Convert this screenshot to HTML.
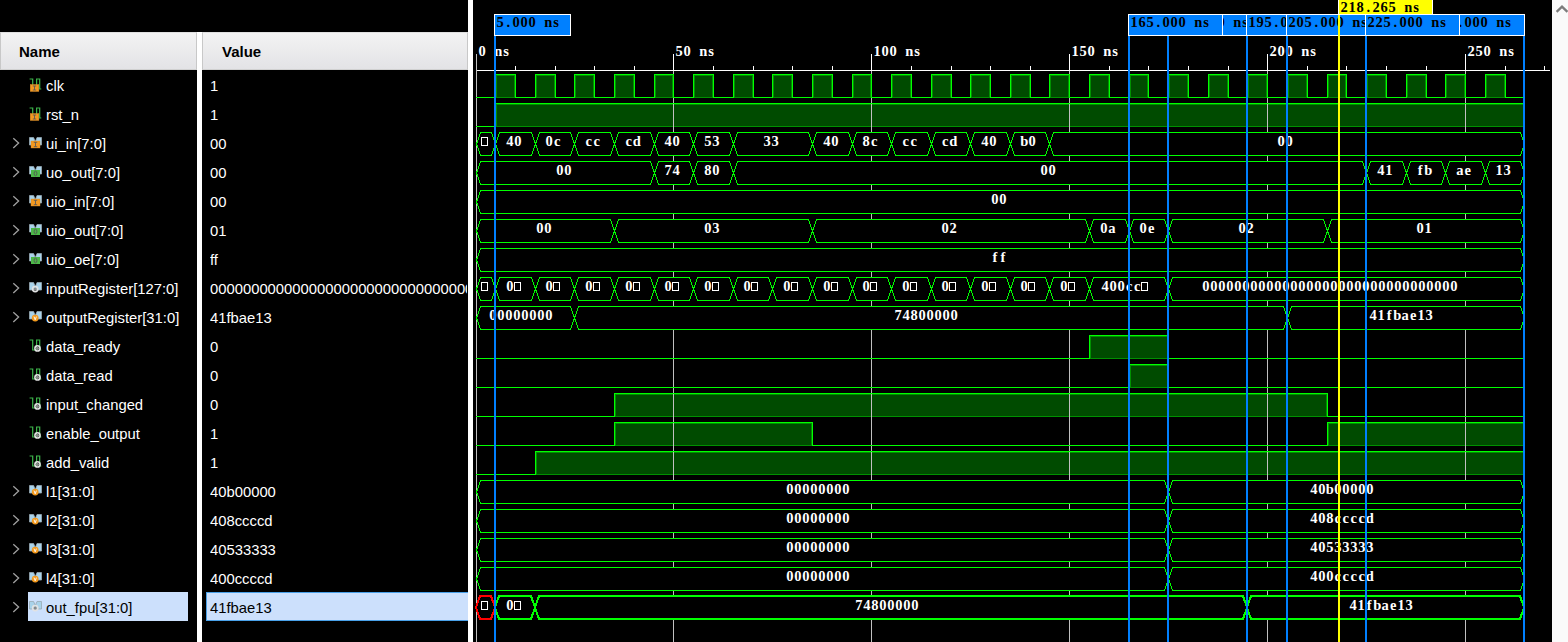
<!DOCTYPE html>
<html><head><meta charset="utf-8"><style>
html,body{margin:0;padding:0;width:1568px;height:642px;overflow:hidden;background:#000}
.p{position:absolute}
.hdr{position:absolute;top:32px;height:38px;box-sizing:border-box;background:linear-gradient(#f3f3f3,#e3e3e6);border-left:1px solid #c8c8c8;border-right:1px solid #c8c8c8;border-top:1px solid #e0e0e0;border-bottom:1px solid #d0d0d0;font:bold 15px "Liberation Sans",sans-serif;line-height:38px;color:#000}
.nm{position:absolute;left:46px;height:29px;font:14.8px "Liberation Sans",sans-serif;line-height:29px;white-space:nowrap}
.vl{position:absolute;left:210px;width:257px;overflow:hidden;height:29px;font:14.8px "Liberation Sans",sans-serif;line-height:29px;white-space:nowrap}
.chev{position:absolute}
svg text{white-space:pre}
.rt{font:bold 14.5px "Liberation Serif",serif;fill:#fff}
.bt{font:bold 14.5px "Liberation Serif",serif;fill:#fff}
.ct{font:bold 14.5px "Liberation Serif",serif;fill:#000}
</style></head><body>
<div class="hdr" style="left:0;width:197px;padding-left:18px">Name</div>
<div class="hdr" style="left:202px;width:266px;padding-left:19px">Value</div>
<div class="p" style="left:197px;top:32px;width:5px;height:610px;background:#fff"></div>
<div class="p" style="left:468px;top:0;width:5px;height:642px;background:#fff"></div>
<svg style="position:absolute;left:29px;top:77.5px" width="14" height="15"><polyline points="0.6,1 3.7,1 3.7,11 7.6,11 7.6,1 10.7,1 10.7,11 12.3,11" fill="none" stroke="#3cb44a" stroke-width="1.2"/><rect x="1.2" y="6.5" width="8.7" height="7" fill="#f4991f" stroke="#d88a30" stroke-width="0.4"/><path d="M3.8,8 H7.2 M5.5,8 V12 M3.8,12 H7.2" stroke="#5a5a5a" stroke-width="0.9"/></svg><div class="nm" style="top:72.0px;color:#fff">clk</div><div class="vl" style="top:72.0px;color:#fff">1</div><svg style="position:absolute;left:29px;top:106.5px" width="14" height="15"><polyline points="0.6,1 3.7,1 3.7,11 7.6,11 7.6,1 10.7,1 10.7,11 12.3,11" fill="none" stroke="#3cb44a" stroke-width="1.2"/><rect x="1.2" y="6.5" width="8.7" height="7" fill="#f4991f" stroke="#d88a30" stroke-width="0.4"/><path d="M3.8,8 H7.2 M5.5,8 V12 M3.8,12 H7.2" stroke="#5a5a5a" stroke-width="0.9"/></svg><div class="nm" style="top:101.0px;color:#fff">rst_n</div><div class="vl" style="top:101.0px;color:#fff">1</div><svg class="chev" style="left:11px;top:137.0px" width="10" height="13"><polyline points="2.3,1.3 7.6,6.1 2.3,10.9" fill="none" stroke="#a0a0a0" stroke-width="1.3"/></svg><svg style="position:absolute;left:29px;top:137.0px" width="14" height="15"><path d="M0.5,0.5 H4.6 L6.3,4.6 L8,0.5 H12.5 V8 H0.5 Z" fill="#a9d3ea" stroke="#98aab4" stroke-width="0.8"/><rect x="2" y="4" width="9" height="7" fill="#f4991f" stroke="#d88a30" stroke-width="0.4"/><path d="M4.8,5.3 H8.2 M6.5,5.3 V9.7 M4.8,9.7 H8.2" stroke="#5a5a5a" stroke-width="0.9"/></svg><div class="nm" style="top:130.0px;color:#fff">ui_in[7:0]</div><div class="vl" style="top:130.0px;color:#fff">00</div><svg class="chev" style="left:11px;top:166.0px" width="10" height="13"><polyline points="2.3,1.3 7.6,6.1 2.3,10.9" fill="none" stroke="#a0a0a0" stroke-width="1.3"/></svg><svg style="position:absolute;left:29px;top:166.0px" width="14" height="15"><path d="M0.5,0.5 H4.6 L6.3,4.6 L8,0.5 H12.5 V8 H0.5 Z" fill="#a9d3ea" stroke="#98aab4" stroke-width="0.8"/><rect x="2" y="4" width="9" height="7" fill="#4cb848"/><ellipse cx="6.5" cy="7.5" rx="1.4" ry="2.3" fill="none" stroke="#555" stroke-width="0.9"/></svg><div class="nm" style="top:159.0px;color:#fff">uo_out[7:0]</div><div class="vl" style="top:159.0px;color:#fff">00</div><svg class="chev" style="left:11px;top:195.0px" width="10" height="13"><polyline points="2.3,1.3 7.6,6.1 2.3,10.9" fill="none" stroke="#a0a0a0" stroke-width="1.3"/></svg><svg style="position:absolute;left:29px;top:195.0px" width="14" height="15"><path d="M0.5,0.5 H4.6 L6.3,4.6 L8,0.5 H12.5 V8 H0.5 Z" fill="#a9d3ea" stroke="#98aab4" stroke-width="0.8"/><rect x="2" y="4" width="9" height="7" fill="#f4991f" stroke="#d88a30" stroke-width="0.4"/><path d="M4.8,5.3 H8.2 M6.5,5.3 V9.7 M4.8,9.7 H8.2" stroke="#5a5a5a" stroke-width="0.9"/></svg><div class="nm" style="top:188.0px;color:#fff">uio_in[7:0]</div><div class="vl" style="top:188.0px;color:#fff">00</div><svg class="chev" style="left:11px;top:224.0px" width="10" height="13"><polyline points="2.3,1.3 7.6,6.1 2.3,10.9" fill="none" stroke="#a0a0a0" stroke-width="1.3"/></svg><svg style="position:absolute;left:29px;top:224.0px" width="14" height="15"><path d="M0.5,0.5 H4.6 L6.3,4.6 L8,0.5 H12.5 V8 H0.5 Z" fill="#a9d3ea" stroke="#98aab4" stroke-width="0.8"/><rect x="2" y="4" width="9" height="7" fill="#4cb848"/><ellipse cx="6.5" cy="7.5" rx="1.4" ry="2.3" fill="none" stroke="#555" stroke-width="0.9"/></svg><div class="nm" style="top:217.0px;color:#fff">uio_out[7:0]</div><div class="vl" style="top:217.0px;color:#fff">01</div><svg class="chev" style="left:11px;top:253.0px" width="10" height="13"><polyline points="2.3,1.3 7.6,6.1 2.3,10.9" fill="none" stroke="#a0a0a0" stroke-width="1.3"/></svg><svg style="position:absolute;left:29px;top:253.0px" width="14" height="15"><path d="M0.5,0.5 H4.6 L6.3,4.6 L8,0.5 H12.5 V8 H0.5 Z" fill="#a9d3ea" stroke="#98aab4" stroke-width="0.8"/><rect x="2" y="4" width="9" height="7" fill="#4cb848"/><ellipse cx="6.5" cy="7.5" rx="1.4" ry="2.3" fill="none" stroke="#555" stroke-width="0.9"/></svg><div class="nm" style="top:246.0px;color:#fff">uio_oe[7:0]</div><div class="vl" style="top:246.0px;color:#fff">ff</div><svg class="chev" style="left:11px;top:282.0px" width="10" height="13"><polyline points="2.3,1.3 7.6,6.1 2.3,10.9" fill="none" stroke="#a0a0a0" stroke-width="1.3"/></svg><svg style="position:absolute;left:29px;top:282.0px" width="14" height="15"><path d="M0.5,0.5 H4.6 L6.3,4.6 L8,0.5 H12.5 V8 H0.5 Z" fill="#a9d3ea" stroke="#98aab4" stroke-width="0.8"/><circle cx="6.2" cy="7.1" r="2.6" fill="none" stroke="#e2e2e2" stroke-width="1.6"/><circle cx="6.2" cy="7.1" r="1.5" fill="#8a8a8a"/></svg><div class="nm" style="top:275.0px;color:#fff">inputRegister[127:0]</div><div class="vl" style="top:275.0px;color:#fff">0000000000000000000000000000000000000000</div><svg class="chev" style="left:11px;top:311.0px" width="10" height="13"><polyline points="2.3,1.3 7.6,6.1 2.3,10.9" fill="none" stroke="#a0a0a0" stroke-width="1.3"/></svg><svg style="position:absolute;left:29px;top:311.0px" width="14" height="15"><path d="M0.5,0.5 H4.6 L6.3,4.6 L8,0.5 H12.5 V8 H0.5 Z" fill="#a9d3ea" stroke="#98aab4" stroke-width="0.8"/><circle cx="6.2" cy="7.1" r="3.4" fill="#f39a1e"/><path d="M5,5.6 L6.2,8.8 L7.4,5.6" fill="none" stroke="#fff" stroke-width="0.9"/></svg><div class="nm" style="top:304.0px;color:#fff">outputRegister[31:0]</div><div class="vl" style="top:304.0px;color:#fff">41fbae13</div><svg style="position:absolute;left:29px;top:338.5px" width="14" height="15"><polyline points="0.6,1 3.7,1 3.7,11 7.6,11 7.6,1 10.7,1 10.7,11 12.3,11" fill="none" stroke="#3cb44a" stroke-width="1.2"/><circle cx="8.5" cy="9.4" r="2.6" fill="none" stroke="#e2e2e2" stroke-width="1.6"/><circle cx="8.5" cy="9.4" r="1.6" fill="#8a8a8a"/></svg><div class="nm" style="top:333.0px;color:#fff">data_ready</div><div class="vl" style="top:333.0px;color:#fff">0</div><svg style="position:absolute;left:29px;top:367.5px" width="14" height="15"><polyline points="0.6,1 3.7,1 3.7,11 7.6,11 7.6,1 10.7,1 10.7,11 12.3,11" fill="none" stroke="#3cb44a" stroke-width="1.2"/><circle cx="8.5" cy="9.4" r="2.6" fill="none" stroke="#e2e2e2" stroke-width="1.6"/><circle cx="8.5" cy="9.4" r="1.6" fill="#8a8a8a"/></svg><div class="nm" style="top:362.0px;color:#fff">data_read</div><div class="vl" style="top:362.0px;color:#fff">0</div><svg style="position:absolute;left:29px;top:396.5px" width="14" height="15"><polyline points="0.6,1 3.7,1 3.7,11 7.6,11 7.6,1 10.7,1 10.7,11 12.3,11" fill="none" stroke="#3cb44a" stroke-width="1.2"/><circle cx="8.5" cy="9.4" r="2.6" fill="none" stroke="#e2e2e2" stroke-width="1.6"/><circle cx="8.5" cy="9.4" r="1.6" fill="#8a8a8a"/></svg><div class="nm" style="top:391.0px;color:#fff">input_changed</div><div class="vl" style="top:391.0px;color:#fff">0</div><svg style="position:absolute;left:29px;top:425.5px" width="14" height="15"><polyline points="0.6,1 3.7,1 3.7,11 7.6,11 7.6,1 10.7,1 10.7,11 12.3,11" fill="none" stroke="#3cb44a" stroke-width="1.2"/><circle cx="8.5" cy="9.4" r="2.6" fill="none" stroke="#e2e2e2" stroke-width="1.6"/><circle cx="8.5" cy="9.4" r="1.6" fill="#8a8a8a"/></svg><div class="nm" style="top:420.0px;color:#fff">enable_output</div><div class="vl" style="top:420.0px;color:#fff">1</div><svg style="position:absolute;left:29px;top:454.5px" width="14" height="15"><polyline points="0.6,1 3.7,1 3.7,11 7.6,11 7.6,1 10.7,1 10.7,11 12.3,11" fill="none" stroke="#3cb44a" stroke-width="1.2"/><circle cx="8.5" cy="9.4" r="2.6" fill="none" stroke="#e2e2e2" stroke-width="1.6"/><circle cx="8.5" cy="9.4" r="1.6" fill="#8a8a8a"/></svg><div class="nm" style="top:449.0px;color:#fff">add_valid</div><div class="vl" style="top:449.0px;color:#fff">1</div><svg class="chev" style="left:11px;top:485.0px" width="10" height="13"><polyline points="2.3,1.3 7.6,6.1 2.3,10.9" fill="none" stroke="#a0a0a0" stroke-width="1.3"/></svg><svg style="position:absolute;left:29px;top:485.0px" width="14" height="15"><path d="M0.5,0.5 H4.6 L6.3,4.6 L8,0.5 H12.5 V8 H0.5 Z" fill="#a9d3ea" stroke="#98aab4" stroke-width="0.8"/><circle cx="6.2" cy="7.1" r="3.4" fill="#f39a1e"/><path d="M5,5.6 L6.2,8.8 L7.4,5.6" fill="none" stroke="#fff" stroke-width="0.9"/></svg><div class="nm" style="top:478.0px;color:#fff">l1[31:0]</div><div class="vl" style="top:478.0px;color:#fff">40b00000</div><svg class="chev" style="left:11px;top:514.0px" width="10" height="13"><polyline points="2.3,1.3 7.6,6.1 2.3,10.9" fill="none" stroke="#a0a0a0" stroke-width="1.3"/></svg><svg style="position:absolute;left:29px;top:514.0px" width="14" height="15"><path d="M0.5,0.5 H4.6 L6.3,4.6 L8,0.5 H12.5 V8 H0.5 Z" fill="#a9d3ea" stroke="#98aab4" stroke-width="0.8"/><circle cx="6.2" cy="7.1" r="3.4" fill="#f39a1e"/><path d="M5,5.6 L6.2,8.8 L7.4,5.6" fill="none" stroke="#fff" stroke-width="0.9"/></svg><div class="nm" style="top:507.0px;color:#fff">l2[31:0]</div><div class="vl" style="top:507.0px;color:#fff">408ccccd</div><svg class="chev" style="left:11px;top:543.0px" width="10" height="13"><polyline points="2.3,1.3 7.6,6.1 2.3,10.9" fill="none" stroke="#a0a0a0" stroke-width="1.3"/></svg><svg style="position:absolute;left:29px;top:543.0px" width="14" height="15"><path d="M0.5,0.5 H4.6 L6.3,4.6 L8,0.5 H12.5 V8 H0.5 Z" fill="#a9d3ea" stroke="#98aab4" stroke-width="0.8"/><circle cx="6.2" cy="7.1" r="3.4" fill="#f39a1e"/><path d="M5,5.6 L6.2,8.8 L7.4,5.6" fill="none" stroke="#fff" stroke-width="0.9"/></svg><div class="nm" style="top:536.0px;color:#fff">l3[31:0]</div><div class="vl" style="top:536.0px;color:#fff">40533333</div><svg class="chev" style="left:11px;top:572.0px" width="10" height="13"><polyline points="2.3,1.3 7.6,6.1 2.3,10.9" fill="none" stroke="#a0a0a0" stroke-width="1.3"/></svg><svg style="position:absolute;left:29px;top:572.0px" width="14" height="15"><path d="M0.5,0.5 H4.6 L6.3,4.6 L8,0.5 H12.5 V8 H0.5 Z" fill="#a9d3ea" stroke="#98aab4" stroke-width="0.8"/><circle cx="6.2" cy="7.1" r="3.4" fill="#f39a1e"/><path d="M5,5.6 L6.2,8.8 L7.4,5.6" fill="none" stroke="#fff" stroke-width="0.9"/></svg><div class="nm" style="top:565.0px;color:#fff">l4[31:0]</div><div class="vl" style="top:565.0px;color:#fff">400ccccd</div><svg class="chev" style="left:11px;top:601.0px" width="10" height="13"><polyline points="2.3,1.3 7.6,6.1 2.3,10.9" fill="none" stroke="#a0a0a0" stroke-width="1.3"/></svg><div style="position:absolute;left:28px;top:592px;width:160px;height:29px;background:#cce0fc"></div><div style="position:absolute;left:206px;top:592px;width:262px;height:29px;background:#cce0fc;box-sizing:border-box;border:1px solid #49a0e8;border-right:none"></div><svg style="position:absolute;left:29px;top:601.0px" width="14" height="15"><path d="M0.5,0.5 H4.6 L6.3,4.6 L8,0.5 H12.5 V8 H0.5 Z" fill="#a9d3ea" stroke="#98aab4" stroke-width="0.8"/><circle cx="6.2" cy="7.1" r="2.6" fill="none" stroke="#e2e2e2" stroke-width="1.6"/><circle cx="6.2" cy="7.1" r="1.5" fill="#8a8a8a"/></svg><div class="nm" style="top:594.0px;color:#000">out_fpu[31:0]</div><div class="vl" style="top:594.0px;color:#000">41fbae13</div>
<div class="p" style="left:1552px;top:0;width:16px;height:642px;background:#fafafa"></div>
<svg class="p" style="left:1554px;top:4px" width="14" height="12"><polyline points="2.6,7.8 8,2.6 13.4,7.8" fill="none" stroke="#7c7c7c" stroke-width="2.3"/></svg>
<svg class="p" style="left:473px;top:0" width="1079" height="642" shape-rendering="crispEdges"><g transform="translate(-473,0)">
<line x1="476" y1="70.5" x2="1550" y2="70.5" stroke="#fff" stroke-width="1"/><line x1="476.5" y1="54" x2="476.5" y2="71" stroke="#fff"/><line x1="515.5" y1="66" x2="515.5" y2="71" stroke="#fff"/><line x1="555.5" y1="66" x2="555.5" y2="71" stroke="#fff"/><line x1="594.5" y1="66" x2="594.5" y2="71" stroke="#fff"/><line x1="634.5" y1="66" x2="634.5" y2="71" stroke="#fff"/><line x1="673.5" y1="54" x2="673.5" y2="71" stroke="#fff"/><line x1="713.5" y1="66" x2="713.5" y2="71" stroke="#fff"/><line x1="753.5" y1="66" x2="753.5" y2="71" stroke="#fff"/><line x1="792.5" y1="66" x2="792.5" y2="71" stroke="#fff"/><line x1="832.5" y1="66" x2="832.5" y2="71" stroke="#fff"/><line x1="871.5" y1="54" x2="871.5" y2="71" stroke="#fff"/><line x1="911.5" y1="66" x2="911.5" y2="71" stroke="#fff"/><line x1="951.5" y1="66" x2="951.5" y2="71" stroke="#fff"/><line x1="990.5" y1="66" x2="990.5" y2="71" stroke="#fff"/><line x1="1030.5" y1="66" x2="1030.5" y2="71" stroke="#fff"/><line x1="1069.5" y1="54" x2="1069.5" y2="71" stroke="#fff"/><line x1="1109.5" y1="66" x2="1109.5" y2="71" stroke="#fff"/><line x1="1148.5" y1="66" x2="1148.5" y2="71" stroke="#fff"/><line x1="1188.5" y1="66" x2="1188.5" y2="71" stroke="#fff"/><line x1="1228.5" y1="66" x2="1228.5" y2="71" stroke="#fff"/><line x1="1267.5" y1="54" x2="1267.5" y2="71" stroke="#fff"/><line x1="1307.5" y1="66" x2="1307.5" y2="71" stroke="#fff"/><line x1="1346.5" y1="66" x2="1346.5" y2="71" stroke="#fff"/><line x1="1386.5" y1="66" x2="1386.5" y2="71" stroke="#fff"/><line x1="1426.5" y1="66" x2="1426.5" y2="71" stroke="#fff"/><line x1="1465.5" y1="54" x2="1465.5" y2="71" stroke="#fff"/><line x1="1505.5" y1="66" x2="1505.5" y2="71" stroke="#fff"/><line x1="1544.5" y1="66" x2="1544.5" y2="71" stroke="#fff"/><text x="482.2 490.2 498.2 506.2" y="56" class="rt" text-anchor="middle">0 ns</text><text x="679.2 687.2 695.2 703.2 711.2" y="56" class="rt" text-anchor="middle">50 ns</text><text x="877.2 885.2 893.2 901.2 909.2 917.2" y="56" class="rt" text-anchor="middle">100 ns</text><text x="1075.2 1083.2 1091.2 1099.2 1107.2 1115.2" y="56" class="rt" text-anchor="middle">150 ns</text><text x="1273.2 1281.2 1289.2 1297.2 1305.2 1313.2" y="56" class="rt" text-anchor="middle">200 ns</text><text x="1471.2 1479.2 1487.2 1495.2 1503.2 1511.2" y="56" class="rt" text-anchor="middle">250 ns</text><rect x="495" y="75" width="20" height="23" fill="#004b00"/><rect x="496" y="75" width="19" height="1" fill="#009000"/><rect x="496" y="97" width="19" height="1" fill="#009000"/><rect x="496" y="75" width="1" height="23" fill="#009000"/><rect x="514" y="75" width="1" height="23" fill="#009000"/><rect x="535" y="75" width="20" height="23" fill="#004b00"/><rect x="536" y="75" width="19" height="1" fill="#009000"/><rect x="536" y="97" width="19" height="1" fill="#009000"/><rect x="536" y="75" width="1" height="23" fill="#009000"/><rect x="554" y="75" width="1" height="23" fill="#009000"/><rect x="574" y="75" width="20" height="23" fill="#004b00"/><rect x="575" y="75" width="19" height="1" fill="#009000"/><rect x="575" y="97" width="19" height="1" fill="#009000"/><rect x="575" y="75" width="1" height="23" fill="#009000"/><rect x="593" y="75" width="1" height="23" fill="#009000"/><rect x="614" y="75" width="20" height="23" fill="#004b00"/><rect x="615" y="75" width="19" height="1" fill="#009000"/><rect x="615" y="97" width="19" height="1" fill="#009000"/><rect x="615" y="75" width="1" height="23" fill="#009000"/><rect x="633" y="75" width="1" height="23" fill="#009000"/><rect x="654" y="75" width="19" height="23" fill="#004b00"/><rect x="655" y="75" width="18" height="1" fill="#009000"/><rect x="655" y="97" width="18" height="1" fill="#009000"/><rect x="655" y="75" width="1" height="23" fill="#009000"/><rect x="672" y="75" width="1" height="23" fill="#009000"/><rect x="693" y="75" width="20" height="23" fill="#004b00"/><rect x="694" y="75" width="19" height="1" fill="#009000"/><rect x="694" y="97" width="19" height="1" fill="#009000"/><rect x="694" y="75" width="1" height="23" fill="#009000"/><rect x="712" y="75" width="1" height="23" fill="#009000"/><rect x="733" y="75" width="20" height="23" fill="#004b00"/><rect x="734" y="75" width="19" height="1" fill="#009000"/><rect x="734" y="97" width="19" height="1" fill="#009000"/><rect x="734" y="75" width="1" height="23" fill="#009000"/><rect x="752" y="75" width="1" height="23" fill="#009000"/><rect x="772" y="75" width="20" height="23" fill="#004b00"/><rect x="773" y="75" width="19" height="1" fill="#009000"/><rect x="773" y="97" width="19" height="1" fill="#009000"/><rect x="773" y="75" width="1" height="23" fill="#009000"/><rect x="791" y="75" width="1" height="23" fill="#009000"/><rect x="812" y="75" width="20" height="23" fill="#004b00"/><rect x="813" y="75" width="19" height="1" fill="#009000"/><rect x="813" y="97" width="19" height="1" fill="#009000"/><rect x="813" y="75" width="1" height="23" fill="#009000"/><rect x="831" y="75" width="1" height="23" fill="#009000"/><rect x="852" y="75" width="19" height="23" fill="#004b00"/><rect x="853" y="75" width="18" height="1" fill="#009000"/><rect x="853" y="97" width="18" height="1" fill="#009000"/><rect x="853" y="75" width="1" height="23" fill="#009000"/><rect x="870" y="75" width="1" height="23" fill="#009000"/><rect x="891" y="75" width="20" height="23" fill="#004b00"/><rect x="892" y="75" width="19" height="1" fill="#009000"/><rect x="892" y="97" width="19" height="1" fill="#009000"/><rect x="892" y="75" width="1" height="23" fill="#009000"/><rect x="910" y="75" width="1" height="23" fill="#009000"/><rect x="931" y="75" width="20" height="23" fill="#004b00"/><rect x="932" y="75" width="19" height="1" fill="#009000"/><rect x="932" y="97" width="19" height="1" fill="#009000"/><rect x="932" y="75" width="1" height="23" fill="#009000"/><rect x="950" y="75" width="1" height="23" fill="#009000"/><rect x="970" y="75" width="20" height="23" fill="#004b00"/><rect x="971" y="75" width="19" height="1" fill="#009000"/><rect x="971" y="97" width="19" height="1" fill="#009000"/><rect x="971" y="75" width="1" height="23" fill="#009000"/><rect x="989" y="75" width="1" height="23" fill="#009000"/><rect x="1010" y="75" width="20" height="23" fill="#004b00"/><rect x="1011" y="75" width="19" height="1" fill="#009000"/><rect x="1011" y="97" width="19" height="1" fill="#009000"/><rect x="1011" y="75" width="1" height="23" fill="#009000"/><rect x="1029" y="75" width="1" height="23" fill="#009000"/><rect x="1049" y="75" width="20" height="23" fill="#004b00"/><rect x="1050" y="75" width="19" height="1" fill="#009000"/><rect x="1050" y="97" width="19" height="1" fill="#009000"/><rect x="1050" y="75" width="1" height="23" fill="#009000"/><rect x="1068" y="75" width="1" height="23" fill="#009000"/><rect x="1089" y="75" width="20" height="23" fill="#004b00"/><rect x="1090" y="75" width="19" height="1" fill="#009000"/><rect x="1090" y="97" width="19" height="1" fill="#009000"/><rect x="1090" y="75" width="1" height="23" fill="#009000"/><rect x="1108" y="75" width="1" height="23" fill="#009000"/><rect x="1129" y="75" width="19" height="23" fill="#004b00"/><rect x="1130" y="75" width="18" height="1" fill="#009000"/><rect x="1130" y="97" width="18" height="1" fill="#009000"/><rect x="1130" y="75" width="1" height="23" fill="#009000"/><rect x="1147" y="75" width="1" height="23" fill="#009000"/><rect x="1168" y="75" width="20" height="23" fill="#004b00"/><rect x="1169" y="75" width="19" height="1" fill="#009000"/><rect x="1169" y="97" width="19" height="1" fill="#009000"/><rect x="1169" y="75" width="1" height="23" fill="#009000"/><rect x="1187" y="75" width="1" height="23" fill="#009000"/><rect x="1208" y="75" width="20" height="23" fill="#004b00"/><rect x="1209" y="75" width="19" height="1" fill="#009000"/><rect x="1209" y="97" width="19" height="1" fill="#009000"/><rect x="1209" y="75" width="1" height="23" fill="#009000"/><rect x="1227" y="75" width="1" height="23" fill="#009000"/><rect x="1247" y="75" width="20" height="23" fill="#004b00"/><rect x="1248" y="75" width="19" height="1" fill="#009000"/><rect x="1248" y="97" width="19" height="1" fill="#009000"/><rect x="1248" y="75" width="1" height="23" fill="#009000"/><rect x="1266" y="75" width="1" height="23" fill="#009000"/><rect x="1287" y="75" width="20" height="23" fill="#004b00"/><rect x="1288" y="75" width="19" height="1" fill="#009000"/><rect x="1288" y="97" width="19" height="1" fill="#009000"/><rect x="1288" y="75" width="1" height="23" fill="#009000"/><rect x="1306" y="75" width="1" height="23" fill="#009000"/><rect x="1327" y="75" width="19" height="23" fill="#004b00"/><rect x="1328" y="75" width="18" height="1" fill="#009000"/><rect x="1328" y="97" width="18" height="1" fill="#009000"/><rect x="1328" y="75" width="1" height="23" fill="#009000"/><rect x="1345" y="75" width="1" height="23" fill="#009000"/><rect x="1366" y="75" width="20" height="23" fill="#004b00"/><rect x="1367" y="75" width="19" height="1" fill="#009000"/><rect x="1367" y="97" width="19" height="1" fill="#009000"/><rect x="1367" y="75" width="1" height="23" fill="#009000"/><rect x="1385" y="75" width="1" height="23" fill="#009000"/><rect x="1406" y="75" width="20" height="23" fill="#004b00"/><rect x="1407" y="75" width="19" height="1" fill="#009000"/><rect x="1407" y="97" width="19" height="1" fill="#009000"/><rect x="1407" y="75" width="1" height="23" fill="#009000"/><rect x="1425" y="75" width="1" height="23" fill="#009000"/><rect x="1445" y="75" width="20" height="23" fill="#004b00"/><rect x="1446" y="75" width="19" height="1" fill="#009000"/><rect x="1446" y="97" width="19" height="1" fill="#009000"/><rect x="1446" y="75" width="1" height="23" fill="#009000"/><rect x="1464" y="75" width="1" height="23" fill="#009000"/><rect x="1485" y="75" width="20" height="23" fill="#004b00"/><rect x="1486" y="75" width="19" height="1" fill="#009000"/><rect x="1486" y="97" width="19" height="1" fill="#009000"/><rect x="1486" y="75" width="1" height="23" fill="#009000"/><rect x="1504" y="75" width="1" height="23" fill="#009000"/><rect x="495" y="104" width="1029" height="23" fill="#004b00"/><rect x="496" y="104" width="1028" height="1" fill="#009000"/><rect x="496" y="126" width="1028" height="1" fill="#009000"/><rect x="496" y="104" width="1" height="23" fill="#009000"/><rect x="1523" y="104" width="1" height="23" fill="#009000"/><rect x="1089" y="336" width="79" height="23" fill="#004b00"/><rect x="1090" y="336" width="78" height="1" fill="#009000"/><rect x="1090" y="358" width="78" height="1" fill="#009000"/><rect x="1090" y="336" width="1" height="23" fill="#009000"/><rect x="1167" y="336" width="1" height="23" fill="#009000"/><rect x="1129" y="365" width="39" height="23" fill="#004b00"/><rect x="1130" y="365" width="38" height="1" fill="#009000"/><rect x="1130" y="387" width="38" height="1" fill="#009000"/><rect x="1130" y="365" width="1" height="23" fill="#009000"/><rect x="1167" y="365" width="1" height="23" fill="#009000"/><rect x="614" y="394" width="713" height="23" fill="#004b00"/><rect x="615" y="394" width="712" height="1" fill="#009000"/><rect x="615" y="416" width="712" height="1" fill="#009000"/><rect x="615" y="394" width="1" height="23" fill="#009000"/><rect x="1326" y="394" width="1" height="23" fill="#009000"/><rect x="614" y="423" width="198" height="23" fill="#004b00"/><rect x="615" y="423" width="197" height="1" fill="#009000"/><rect x="615" y="445" width="197" height="1" fill="#009000"/><rect x="615" y="423" width="1" height="23" fill="#009000"/><rect x="811" y="423" width="1" height="23" fill="#009000"/><rect x="1327" y="423" width="197" height="23" fill="#004b00"/><rect x="1328" y="423" width="196" height="1" fill="#009000"/><rect x="1328" y="445" width="196" height="1" fill="#009000"/><rect x="1328" y="423" width="1" height="23" fill="#009000"/><rect x="1523" y="423" width="1" height="23" fill="#009000"/><rect x="535" y="452" width="989" height="23" fill="#004b00"/><rect x="536" y="452" width="988" height="1" fill="#009000"/><rect x="536" y="474" width="988" height="1" fill="#009000"/><rect x="536" y="452" width="1" height="23" fill="#009000"/><rect x="1523" y="452" width="1" height="23" fill="#009000"/><line x1="476.5" y1="54" x2="476.5" y2="642" stroke="#c0c0c0"/><line x1="673.5" y1="71" x2="673.5" y2="642" stroke="#c0c0c0"/><line x1="871.5" y1="71" x2="871.5" y2="642" stroke="#c0c0c0"/><line x1="1069.5" y1="71" x2="1069.5" y2="642" stroke="#c0c0c0"/><line x1="1267.5" y1="71" x2="1267.5" y2="642" stroke="#c0c0c0"/><line x1="1465.5" y1="71" x2="1465.5" y2="642" stroke="#c0c0c0"/><polyline points="476,97.5 495.5,97.5 495.5,74.5 515.5,74.5 515.5,97.5 535.5,97.5 535.5,74.5 555.5,74.5 555.5,97.5 574.5,97.5 574.5,74.5 594.5,74.5 594.5,97.5 614.5,97.5 614.5,74.5 634.5,74.5 634.5,97.5 654.5,97.5 654.5,74.5 673.5,74.5 673.5,97.5 693.5,97.5 693.5,74.5 713.5,74.5 713.5,97.5 733.5,97.5 733.5,74.5 753.5,74.5 753.5,97.5 772.5,97.5 772.5,74.5 792.5,74.5 792.5,97.5 812.5,97.5 812.5,74.5 832.5,74.5 832.5,97.5 852.5,97.5 852.5,74.5 871.5,74.5 871.5,97.5 891.5,97.5 891.5,74.5 911.5,74.5 911.5,97.5 931.5,97.5 931.5,74.5 951.5,74.5 951.5,97.5 970.5,97.5 970.5,74.5 990.5,74.5 990.5,97.5 1010.5,97.5 1010.5,74.5 1030.5,74.5 1030.5,97.5 1049.5,97.5 1049.5,74.5 1069.5,74.5 1069.5,97.5 1089.5,97.5 1089.5,74.5 1109.5,74.5 1109.5,97.5 1129.5,97.5 1129.5,74.5 1148.5,74.5 1148.5,97.5 1168.5,97.5 1168.5,74.5 1188.5,74.5 1188.5,97.5 1208.5,97.5 1208.5,74.5 1228.5,74.5 1228.5,97.5 1247.5,97.5 1247.5,74.5 1267.5,74.5 1267.5,97.5 1287.5,97.5 1287.5,74.5 1307.5,74.5 1307.5,97.5 1327.5,97.5 1327.5,74.5 1346.5,74.5 1346.5,97.5 1366.5,97.5 1366.5,74.5 1386.5,74.5 1386.5,97.5 1406.5,97.5 1406.5,74.5 1426.5,74.5 1426.5,97.5 1445.5,97.5 1445.5,74.5 1465.5,74.5 1465.5,97.5 1485.5,97.5 1485.5,74.5 1505.5,74.5 1505.5,97.5 1524.5,97.5" fill="none" stroke="#00ff00" stroke-width="1"/><polyline points="476,126.5 495.5,126.5 495.5,103.5 1524.5,103.5" fill="none" stroke="#00ff00" stroke-width="1"/><polygon points="476.5,144.0 480.5,132.5 491.5,132.5 495.5,144.0 491.5,155.5 480.5,155.5" fill="#000" stroke="#00ff00" stroke-width="1"/><polygon points="495.5,144.0 499.5,132.5 531.5,132.5 535.5,144.0 531.5,155.5 499.5,155.5" fill="#000" stroke="#00ff00" stroke-width="1"/><polygon points="535.5,144.0 539.5,132.5 570.5,132.5 574.5,144.0 570.5,155.5 539.5,155.5" fill="#000" stroke="#00ff00" stroke-width="1"/><polygon points="574.5,144.0 578.5,132.5 610.5,132.5 614.5,144.0 610.5,155.5 578.5,155.5" fill="#000" stroke="#00ff00" stroke-width="1"/><polygon points="614.5,144.0 618.5,132.5 650.5,132.5 654.5,144.0 650.5,155.5 618.5,155.5" fill="#000" stroke="#00ff00" stroke-width="1"/><polygon points="654.5,144.0 658.5,132.5 689.5,132.5 693.5,144.0 689.5,155.5 658.5,155.5" fill="#000" stroke="#00ff00" stroke-width="1"/><polygon points="693.5,144.0 697.5,132.5 729.5,132.5 733.5,144.0 729.5,155.5 697.5,155.5" fill="#000" stroke="#00ff00" stroke-width="1"/><polygon points="733.5,144.0 737.5,132.5 808.5,132.5 812.5,144.0 808.5,155.5 737.5,155.5" fill="#000" stroke="#00ff00" stroke-width="1"/><polygon points="812.5,144.0 816.5,132.5 848.5,132.5 852.5,144.0 848.5,155.5 816.5,155.5" fill="#000" stroke="#00ff00" stroke-width="1"/><polygon points="852.5,144.0 856.5,132.5 887.5,132.5 891.5,144.0 887.5,155.5 856.5,155.5" fill="#000" stroke="#00ff00" stroke-width="1"/><polygon points="891.5,144.0 895.5,132.5 927.5,132.5 931.5,144.0 927.5,155.5 895.5,155.5" fill="#000" stroke="#00ff00" stroke-width="1"/><polygon points="931.5,144.0 935.5,132.5 966.5,132.5 970.5,144.0 966.5,155.5 935.5,155.5" fill="#000" stroke="#00ff00" stroke-width="1"/><polygon points="970.5,144.0 974.5,132.5 1006.5,132.5 1010.5,144.0 1006.5,155.5 974.5,155.5" fill="#000" stroke="#00ff00" stroke-width="1"/><polygon points="1010.5,144.0 1014.5,132.5 1045.5,132.5 1049.5,144.0 1045.5,155.5 1014.5,155.5" fill="#000" stroke="#00ff00" stroke-width="1"/><polygon points="1049.5,144.0 1053.5,132.5 1520.5,132.5 1524.5,144.0 1520.5,155.5 1053.5,155.5" fill="#000" stroke="#00ff00" stroke-width="1"/><polygon points="476.5,173.0 480.5,161.5 650.5,161.5 654.5,173.0 650.5,184.5 480.5,184.5" fill="#000" stroke="#00ff00" stroke-width="1"/><polygon points="654.5,173.0 658.5,161.5 689.5,161.5 693.5,173.0 689.5,184.5 658.5,184.5" fill="#000" stroke="#00ff00" stroke-width="1"/><polygon points="693.5,173.0 697.5,161.5 729.5,161.5 733.5,173.0 729.5,184.5 697.5,184.5" fill="#000" stroke="#00ff00" stroke-width="1"/><polygon points="733.5,173.0 737.5,161.5 1362.5,161.5 1366.5,173.0 1362.5,184.5 737.5,184.5" fill="#000" stroke="#00ff00" stroke-width="1"/><polygon points="1366.5,173.0 1370.5,161.5 1402.5,161.5 1406.5,173.0 1402.5,184.5 1370.5,184.5" fill="#000" stroke="#00ff00" stroke-width="1"/><polygon points="1406.5,173.0 1410.5,161.5 1441.5,161.5 1445.5,173.0 1441.5,184.5 1410.5,184.5" fill="#000" stroke="#00ff00" stroke-width="1"/><polygon points="1445.5,173.0 1449.5,161.5 1481.5,161.5 1485.5,173.0 1481.5,184.5 1449.5,184.5" fill="#000" stroke="#00ff00" stroke-width="1"/><polygon points="1485.5,173.0 1489.5,161.5 1520.5,161.5 1524.5,173.0 1520.5,184.5 1489.5,184.5" fill="#000" stroke="#00ff00" stroke-width="1"/><polygon points="476.5,202.0 480.5,190.5 1520.5,190.5 1524.5,202.0 1520.5,213.5 480.5,213.5" fill="#000" stroke="#00ff00" stroke-width="1"/><polygon points="476.5,231.0 480.5,219.5 610.5,219.5 614.5,231.0 610.5,242.5 480.5,242.5" fill="#000" stroke="#00ff00" stroke-width="1"/><polygon points="614.5,231.0 618.5,219.5 808.5,219.5 812.5,231.0 808.5,242.5 618.5,242.5" fill="#000" stroke="#00ff00" stroke-width="1"/><polygon points="812.5,231.0 816.5,219.5 1085.5,219.5 1089.5,231.0 1085.5,242.5 816.5,242.5" fill="#000" stroke="#00ff00" stroke-width="1"/><polygon points="1089.5,231.0 1093.5,219.5 1125.5,219.5 1129.5,231.0 1125.5,242.5 1093.5,242.5" fill="#000" stroke="#00ff00" stroke-width="1"/><polygon points="1129.5,231.0 1133.5,219.5 1164.5,219.5 1168.5,231.0 1164.5,242.5 1133.5,242.5" fill="#000" stroke="#00ff00" stroke-width="1"/><polygon points="1168.5,231.0 1172.5,219.5 1323.5,219.5 1327.5,231.0 1323.5,242.5 1172.5,242.5" fill="#000" stroke="#00ff00" stroke-width="1"/><polygon points="1327.5,231.0 1331.5,219.5 1520.5,219.5 1524.5,231.0 1520.5,242.5 1331.5,242.5" fill="#000" stroke="#00ff00" stroke-width="1"/><polygon points="476.5,260.0 480.5,248.5 1520.5,248.5 1524.5,260.0 1520.5,271.5 480.5,271.5" fill="#000" stroke="#00ff00" stroke-width="1"/><polygon points="476.5,289.0 480.5,277.5 491.5,277.5 495.5,289.0 491.5,300.5 480.5,300.5" fill="#000" stroke="#00ff00" stroke-width="1"/><polygon points="495.5,289.0 499.5,277.5 531.5,277.5 535.5,289.0 531.5,300.5 499.5,300.5" fill="#000" stroke="#00ff00" stroke-width="1"/><polygon points="535.5,289.0 539.5,277.5 570.5,277.5 574.5,289.0 570.5,300.5 539.5,300.5" fill="#000" stroke="#00ff00" stroke-width="1"/><polygon points="574.5,289.0 578.5,277.5 610.5,277.5 614.5,289.0 610.5,300.5 578.5,300.5" fill="#000" stroke="#00ff00" stroke-width="1"/><polygon points="614.5,289.0 618.5,277.5 650.5,277.5 654.5,289.0 650.5,300.5 618.5,300.5" fill="#000" stroke="#00ff00" stroke-width="1"/><polygon points="654.5,289.0 658.5,277.5 689.5,277.5 693.5,289.0 689.5,300.5 658.5,300.5" fill="#000" stroke="#00ff00" stroke-width="1"/><polygon points="693.5,289.0 697.5,277.5 729.5,277.5 733.5,289.0 729.5,300.5 697.5,300.5" fill="#000" stroke="#00ff00" stroke-width="1"/><polygon points="733.5,289.0 737.5,277.5 768.5,277.5 772.5,289.0 768.5,300.5 737.5,300.5" fill="#000" stroke="#00ff00" stroke-width="1"/><polygon points="772.5,289.0 776.5,277.5 808.5,277.5 812.5,289.0 808.5,300.5 776.5,300.5" fill="#000" stroke="#00ff00" stroke-width="1"/><polygon points="812.5,289.0 816.5,277.5 848.5,277.5 852.5,289.0 848.5,300.5 816.5,300.5" fill="#000" stroke="#00ff00" stroke-width="1"/><polygon points="852.5,289.0 856.5,277.5 887.5,277.5 891.5,289.0 887.5,300.5 856.5,300.5" fill="#000" stroke="#00ff00" stroke-width="1"/><polygon points="891.5,289.0 895.5,277.5 927.5,277.5 931.5,289.0 927.5,300.5 895.5,300.5" fill="#000" stroke="#00ff00" stroke-width="1"/><polygon points="931.5,289.0 935.5,277.5 966.5,277.5 970.5,289.0 966.5,300.5 935.5,300.5" fill="#000" stroke="#00ff00" stroke-width="1"/><polygon points="970.5,289.0 974.5,277.5 1006.5,277.5 1010.5,289.0 1006.5,300.5 974.5,300.5" fill="#000" stroke="#00ff00" stroke-width="1"/><polygon points="1010.5,289.0 1014.5,277.5 1045.5,277.5 1049.5,289.0 1045.5,300.5 1014.5,300.5" fill="#000" stroke="#00ff00" stroke-width="1"/><polygon points="1049.5,289.0 1053.5,277.5 1085.5,277.5 1089.5,289.0 1085.5,300.5 1053.5,300.5" fill="#000" stroke="#00ff00" stroke-width="1"/><polygon points="1089.5,289.0 1093.5,277.5 1164.5,277.5 1168.5,289.0 1164.5,300.5 1093.5,300.5" fill="#000" stroke="#00ff00" stroke-width="1"/><polygon points="1168.5,289.0 1172.5,277.5 1520.5,277.5 1524.5,289.0 1520.5,300.5 1172.5,300.5" fill="#000" stroke="#00ff00" stroke-width="1"/><polygon points="476.5,318.0 480.5,306.5 570.5,306.5 574.5,318.0 570.5,329.5 480.5,329.5" fill="#000" stroke="#00ff00" stroke-width="1"/><polygon points="574.5,318.0 578.5,306.5 1283.5,306.5 1287.5,318.0 1283.5,329.5 578.5,329.5" fill="#000" stroke="#00ff00" stroke-width="1"/><polygon points="1287.5,318.0 1291.5,306.5 1520.5,306.5 1524.5,318.0 1520.5,329.5 1291.5,329.5" fill="#000" stroke="#00ff00" stroke-width="1"/><polyline points="476,358.5 1089.5,358.5 1089.5,335.5 1168.5,335.5 1168.5,358.5 1524.5,358.5" fill="none" stroke="#00ff00" stroke-width="1"/><polyline points="476,387.5 1129.5,387.5 1129.5,364.5 1168.5,364.5 1168.5,387.5 1524.5,387.5" fill="none" stroke="#00ff00" stroke-width="1"/><polyline points="476,416.5 614.5,416.5 614.5,393.5 1327.5,393.5 1327.5,416.5 1524.5,416.5" fill="none" stroke="#00ff00" stroke-width="1"/><polyline points="476,445.5 614.5,445.5 614.5,422.5 812.5,422.5 812.5,445.5 1327.5,445.5 1327.5,422.5 1524.5,422.5" fill="none" stroke="#00ff00" stroke-width="1"/><polyline points="476,474.5 535.5,474.5 535.5,451.5 1524.5,451.5" fill="none" stroke="#00ff00" stroke-width="1"/><polygon points="476.5,492.0 480.5,480.5 1164.5,480.5 1168.5,492.0 1164.5,503.5 480.5,503.5" fill="#000" stroke="#00ff00" stroke-width="1"/><polygon points="1168.5,492.0 1172.5,480.5 1520.5,480.5 1524.5,492.0 1520.5,503.5 1172.5,503.5" fill="#000" stroke="#00ff00" stroke-width="1"/><polygon points="476.5,521.0 480.5,509.5 1164.5,509.5 1168.5,521.0 1164.5,532.5 480.5,532.5" fill="#000" stroke="#00ff00" stroke-width="1"/><polygon points="1168.5,521.0 1172.5,509.5 1520.5,509.5 1524.5,521.0 1520.5,532.5 1172.5,532.5" fill="#000" stroke="#00ff00" stroke-width="1"/><polygon points="476.5,550.0 480.5,538.5 1164.5,538.5 1168.5,550.0 1164.5,561.5 480.5,561.5" fill="#000" stroke="#00ff00" stroke-width="1"/><polygon points="1168.5,550.0 1172.5,538.5 1520.5,538.5 1524.5,550.0 1520.5,561.5 1172.5,561.5" fill="#000" stroke="#00ff00" stroke-width="1"/><polygon points="476.5,579.0 480.5,567.5 1164.5,567.5 1168.5,579.0 1164.5,590.5 480.5,590.5" fill="#000" stroke="#00ff00" stroke-width="1"/><polygon points="1168.5,579.0 1172.5,567.5 1520.5,567.5 1524.5,579.0 1520.5,590.5 1172.5,590.5" fill="#000" stroke="#00ff00" stroke-width="1"/><polygon points="476,607.5 480,596 491,596 495,607.5 491,619 480,619" fill="#000" stroke="#ff0000" stroke-width="2"/><polygon points="495,607.5 499,596 531,596 535,607.5 531,619 499,619" fill="#000" stroke="#00ff00" stroke-width="2"/><polygon points="535,607.5 539,596 1243,596 1247,607.5 1243,619 539,619" fill="#000" stroke="#00ff00" stroke-width="2"/><polygon points="1247,607.5 1251,596 1520,596 1524,607.5 1520,619 1251,619" fill="#000" stroke="#00ff00" stroke-width="2"/><rect x="481.5" y="137.5" width="6" height="8" fill="none" stroke="#fff" stroke-width="1.1"/><text x="484.8" y="146" class="bt" text-anchor="middle"> </text><text x="509.8 517.8" y="146" class="bt" text-anchor="middle">40</text><text x="549.2 557.2" y="146" class="bt" text-anchor="middle">0c</text><text x="588.8 596.8" y="146" class="bt" text-anchor="middle">cc</text><text x="628.8 636.8" y="146" class="bt" text-anchor="middle">cd</text><text x="668.2 676.2" y="146" class="bt" text-anchor="middle">40</text><text x="707.8 715.8" y="146" class="bt" text-anchor="middle">53</text><text x="767.2 775.2" y="146" class="bt" text-anchor="middle">33</text><text x="826.8 834.8" y="146" class="bt" text-anchor="middle">40</text><text x="866.2 874.2" y="146" class="bt" text-anchor="middle">8c</text><text x="905.8 913.8" y="146" class="bt" text-anchor="middle">cc</text><text x="945.2 953.2" y="146" class="bt" text-anchor="middle">cd</text><text x="984.8 992.8" y="146" class="bt" text-anchor="middle">40</text><text x="1024.2 1032.2" y="146" class="bt" text-anchor="middle">b0</text><text x="1281.2 1289.2" y="146" class="bt" text-anchor="middle">00</text><text x="559.8 567.8" y="175" class="bt" text-anchor="middle">00</text><text x="668.2 676.2" y="175" class="bt" text-anchor="middle">74</text><text x="707.8 715.8" y="175" class="bt" text-anchor="middle">80</text><text x="1044.2 1052.2" y="175" class="bt" text-anchor="middle">00</text><text x="1380.8 1388.8" y="175" class="bt" text-anchor="middle">41</text><text x="1420.2 1428.2" y="175" class="bt" text-anchor="middle">fb</text><text x="1459.8 1467.8" y="175" class="bt" text-anchor="middle">ae</text><text x="1499.2 1507.2" y="175" class="bt" text-anchor="middle">13</text><text x="994.8 1002.8" y="204" class="bt" text-anchor="middle">00</text><text x="539.8 547.8" y="233" class="bt" text-anchor="middle">00</text><text x="707.8 715.8" y="233" class="bt" text-anchor="middle">03</text><text x="945.2 953.2" y="233" class="bt" text-anchor="middle">02</text><text x="1103.8 1111.8" y="233" class="bt" text-anchor="middle">0a</text><text x="1143.2 1151.2" y="233" class="bt" text-anchor="middle">0e</text><text x="1242.2 1250.2" y="233" class="bt" text-anchor="middle">02</text><text x="1420.2 1428.2" y="233" class="bt" text-anchor="middle">01</text><text x="994.8 1002.8" y="262" class="bt" text-anchor="middle">ff</text><rect x="481.5" y="282.5" width="6" height="8" fill="none" stroke="#fff" stroke-width="1.1"/><text x="484.8" y="291" class="bt" text-anchor="middle"> </text><rect x="514.5" y="282.5" width="6" height="8" fill="none" stroke="#fff" stroke-width="1.1"/><text x="509.8 517.8" y="291" class="bt" text-anchor="middle">0 </text><rect x="553.5" y="282.5" width="6" height="8" fill="none" stroke="#fff" stroke-width="1.1"/><text x="549.2 557.2" y="291" class="bt" text-anchor="middle">0 </text><rect x="593.5" y="282.5" width="6" height="8" fill="none" stroke="#fff" stroke-width="1.1"/><text x="588.8 596.8" y="291" class="bt" text-anchor="middle">0 </text><rect x="633.5" y="282.5" width="6" height="8" fill="none" stroke="#fff" stroke-width="1.1"/><text x="628.8 636.8" y="291" class="bt" text-anchor="middle">0 </text><rect x="672.5" y="282.5" width="6" height="8" fill="none" stroke="#fff" stroke-width="1.1"/><text x="668.2 676.2" y="291" class="bt" text-anchor="middle">0 </text><rect x="712.5" y="282.5" width="6" height="8" fill="none" stroke="#fff" stroke-width="1.1"/><text x="707.8 715.8" y="291" class="bt" text-anchor="middle">0 </text><rect x="751.5" y="282.5" width="6" height="8" fill="none" stroke="#fff" stroke-width="1.1"/><text x="747.2 755.2" y="291" class="bt" text-anchor="middle">0 </text><rect x="791.5" y="282.5" width="6" height="8" fill="none" stroke="#fff" stroke-width="1.1"/><text x="786.8 794.8" y="291" class="bt" text-anchor="middle">0 </text><rect x="831.5" y="282.5" width="6" height="8" fill="none" stroke="#fff" stroke-width="1.1"/><text x="826.8 834.8" y="291" class="bt" text-anchor="middle">0 </text><rect x="870.5" y="282.5" width="6" height="8" fill="none" stroke="#fff" stroke-width="1.1"/><text x="866.2 874.2" y="291" class="bt" text-anchor="middle">0 </text><rect x="910.5" y="282.5" width="6" height="8" fill="none" stroke="#fff" stroke-width="1.1"/><text x="905.8 913.8" y="291" class="bt" text-anchor="middle">0 </text><rect x="949.5" y="282.5" width="6" height="8" fill="none" stroke="#fff" stroke-width="1.1"/><text x="945.2 953.2" y="291" class="bt" text-anchor="middle">0 </text><rect x="989.5" y="282.5" width="6" height="8" fill="none" stroke="#fff" stroke-width="1.1"/><text x="984.8 992.8" y="291" class="bt" text-anchor="middle">0 </text><rect x="1028.5" y="282.5" width="6" height="8" fill="none" stroke="#fff" stroke-width="1.1"/><text x="1024.2 1032.2" y="291" class="bt" text-anchor="middle">0 </text><rect x="1068.5" y="282.5" width="6" height="8" fill="none" stroke="#fff" stroke-width="1.1"/><text x="1063.8 1071.8" y="291" class="bt" text-anchor="middle">0 </text><rect x="1141.5" y="282.5" width="6" height="8" fill="none" stroke="#fff" stroke-width="1.1"/><text x="1105.2 1113.2 1121.2 1129.2 1137.2 1145.2" y="291" class="bt" text-anchor="middle">400cc </text><text x="1205.8 1213.8 1221.8 1229.8 1237.8 1245.8 1253.8 1261.8 1269.8 1277.8 1285.8 1293.8 1301.8 1309.8 1317.8 1325.8 1333.8 1341.8 1349.8 1357.8 1365.8 1373.8 1381.8 1389.8 1397.8 1405.8 1413.8 1421.8 1429.8 1437.8 1445.8 1453.8" y="291" class="bt" text-anchor="middle">00000000000000000000000000000000</text><text x="492.8 500.8 508.8 516.8 524.8 532.8 540.8 548.8" y="320" class="bt" text-anchor="middle">00000000</text><text x="898.2 906.2 914.2 922.2 930.2 938.2 946.2 954.2" y="320" class="bt" text-anchor="middle">74800000</text><text x="1373.2 1381.2 1389.2 1397.2 1405.2 1413.2 1421.2 1429.2" y="320" class="bt" text-anchor="middle">41fbae13</text><text x="789.8 797.8 805.8 813.8 821.8 829.8 837.8 845.8" y="494" class="bt" text-anchor="middle">00000000</text><text x="1313.8 1321.8 1329.8 1337.8 1345.8 1353.8 1361.8 1369.8" y="494" class="bt" text-anchor="middle">40b00000</text><text x="789.8 797.8 805.8 813.8 821.8 829.8 837.8 845.8" y="523" class="bt" text-anchor="middle">00000000</text><text x="1313.8 1321.8 1329.8 1337.8 1345.8 1353.8 1361.8 1369.8" y="523" class="bt" text-anchor="middle">408ccccd</text><text x="789.8 797.8 805.8 813.8 821.8 829.8 837.8 845.8" y="552" class="bt" text-anchor="middle">00000000</text><text x="1313.8 1321.8 1329.8 1337.8 1345.8 1353.8 1361.8 1369.8" y="552" class="bt" text-anchor="middle">40533333</text><text x="789.8 797.8 805.8 813.8 821.8 829.8 837.8 845.8" y="581" class="bt" text-anchor="middle">00000000</text><text x="1313.8 1321.8 1329.8 1337.8 1345.8 1353.8 1361.8 1369.8" y="581" class="bt" text-anchor="middle">400ccccd</text><rect x="481.5" y="601.5" width="6" height="8" fill="none" stroke="#fff" stroke-width="1.1"/><text x="484.8" y="610" class="bt" text-anchor="middle"> </text><rect x="514.5" y="601.5" width="6" height="8" fill="none" stroke="#fff" stroke-width="1.1"/><text x="509.8 517.8" y="610" class="bt" text-anchor="middle">0 </text><text x="858.8 866.8 874.8 882.8 890.8 898.8 906.8 914.8" y="610" class="bt" text-anchor="middle">74800000</text><text x="1353.2 1361.2 1369.2 1377.2 1385.2 1393.2 1401.2 1409.2" y="610" class="bt" text-anchor="middle">41fbae13</text><rect x="494" y="36" width="2" height="606" fill="#0080ff"/><rect x="1128" y="36" width="2" height="606" fill="#0080ff"/><rect x="1167" y="36" width="2" height="606" fill="#0080ff"/><rect x="1246" y="36" width="2" height="606" fill="#0080ff"/><rect x="1286" y="36" width="2" height="606" fill="#0080ff"/><rect x="1365" y="36" width="2" height="606" fill="#0080ff"/><rect x="1523" y="36" width="2" height="606" fill="#0080ff"/><rect x="494.5" y="14.5" width="76" height="21" fill="#0080ff" stroke="#fff" stroke-width="1"/><text x="500.2 508.2 516.2 524.2 532.2 540.2 548.2 556.2" y="27" class="ct" text-anchor="middle">5.000 ns</text><rect x="1430.5" y="14.5" width="94" height="21" fill="#0080ff" stroke="#fff" stroke-width="1"/><text x="1436.2 1444.2 1452.2 1460.2 1468.2 1476.2 1484.2 1492.2 1500.2 1508.2" y="27" class="ct" text-anchor="middle">265.000 ns</text><rect x="1167.5" y="14.5" width="94" height="21" fill="#0080ff" stroke="#fff" stroke-width="1"/><text x="1173.2 1181.2 1189.2 1197.2 1205.2 1213.2 1221.2 1229.2 1237.2 1245.2" y="27" class="ct" text-anchor="middle">175.000 ns</text><rect x="1128.5" y="14.5" width="94" height="21" fill="#0080ff" stroke="#fff" stroke-width="1"/><text x="1134.2 1142.2 1150.2 1158.2 1166.2 1174.2 1182.2 1190.2 1198.2 1206.2" y="27" class="ct" text-anchor="middle">165.000 ns</text><rect x="1246.5" y="14.5" width="94" height="21" fill="#0080ff" stroke="#fff" stroke-width="1"/><text x="1252.2 1260.2 1268.2 1276.2 1284.2 1292.2 1300.2 1308.2 1316.2 1324.2" y="27" class="ct" text-anchor="middle">195.000 ns</text><rect x="1286.5" y="14.5" width="94" height="21" fill="#0080ff" stroke="#fff" stroke-width="1"/><text x="1292.2 1300.2 1308.2 1316.2 1324.2 1332.2 1340.2 1348.2 1356.2 1364.2" y="27" class="ct" text-anchor="middle">205.000 ns</text><rect x="1365.5" y="14.5" width="94" height="21" fill="#0080ff" stroke="#fff" stroke-width="1"/><text x="1371.2 1379.2 1387.2 1395.2 1403.2 1411.2 1419.2 1427.2 1435.2 1443.2" y="27" class="ct" text-anchor="middle">225.000 ns</text><rect x="1338.5" y="-0.5" width="94" height="15" fill="#ffff00" stroke="#fff" stroke-width="1"/><text x="1344.2 1352.2 1360.2 1368.2 1376.2 1384.2 1392.2 1400.2 1408.2 1416.2" y="12" class="ct" text-anchor="middle">218.265 ns</text><rect x="1338" y="15" width="2" height="627" fill="#ffff00"/>
</g></svg>
</body></html>
